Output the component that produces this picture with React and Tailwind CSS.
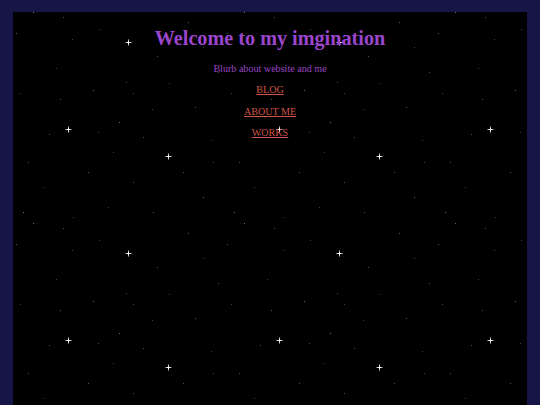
import React from "react";

// Faint stars that repeat across every 211px tile of the sky
const dimStars = [
  [20, 0, 0.4], [50, 5, 0.3], [86, 17, 0.25], [3, 21, 0.35], [59, 27, 0.25],
  [144, 44, 0.3], [43, 56, 0.25], [113, 70, 0.3], [156, 71, 0.25], [80, 78, 0.4],
  [7, 81, 0.25], [120, 81, 0.25], [47, 87, 0.35], [139, 97, 0.25], [106, 110, 0.45],
  [36, 122, 0.3], [175, 10, 0.35], [190, 35, 0.25], [205, 60, 0.3], [182, 95, 0.35],
  [198, 128, 0.25], [170, 160, 0.3], [190, 185, 0.4], [15, 150, 0.3], [30, 175, 0.25],
  [75, 160, 0.35], [95, 195, 0.25], [120, 170, 0.3], [140, 200, 0.35], [60, 205, 0.25],
  [10, 200, 0.45], [100, 140, 0.25], [130, 125, 0.3], [85, 120, 0.25], [200, 150, 0.25],
];

// Bright four-point sparkles in each tile
const brightStars = [
  [115, 30],
  [55, 117],
  [155, 144],
];

function Sparkle({ x, y }) {
  return (
    <g>
      <rect x={x - 3} y={y} width="7" height="1" fill="#6a6a6a" />
      <rect x={x} y={y - 3} width="1" height="7" fill="#6a6a6a" />
      <rect x={x - 2} y={y} width="5" height="1" fill="#bdbdbd" />
      <rect x={x} y={y - 2} width="1" height="5" fill="#bdbdbd" />
      <rect x={x - 1} y={y} width="3" height="1" fill="#ffffff" />
      <rect x={x} y={y - 1} width="1" height="3" fill="#ffffff" />
    </g>
  );
}

function StarField() {
  return (
    <svg className="absolute inset-0 w-full h-full" aria-hidden="true">
      <defs>
        <pattern id="sky" width="211" height="211" patternUnits="userSpaceOnUse">
          <rect width="211" height="211" fill="#000" />
          {dimStars.map(([x, y, o], i) => (
            <rect key={i} x={x} y={y} width="1" height="1" fill="#fff" opacity={o} />
          ))}
          {brightStars.map(([x, y], i) => (
            <Sparkle key={i} x={x} y={y} />
          ))}
        </pattern>
      </defs>
      <rect width="100%" height="100%" fill="url(#sky)" />
    </svg>
  );
}

export default function App() {
  const links = ["BLOG", "ABOUT ME", "WORKS"];
  return (
    <div className="min-h-screen bg-[#151546] pt-[12px] px-[13px] overflow-hidden">
      <div className="relative bg-black h-[393px] overflow-hidden">
        <StarField />
        <main className="relative flex flex-col items-center text-center font-['Liberation_Serif',serif]">
          <h1 className="mt-[13px] text-[20.2px] leading-[26px] font-bold text-[#9b45cc]">
            Welcome to my imgination
          </h1>
          <p className="mt-[11px] text-[10.1px] leading-[13px] text-[#9844c0]">
            Blurb about website and me
          </p>
          <nav className="mt-[9px] flex flex-col items-center gap-[9px]">
            {links.map((l) => (
              <a
                key={l}
                href="#"
                className="text-[10.1px] leading-[12.5px] text-[#cc5449] underline"
              >
                {l}
              </a>
            ))}
          </nav>
        </main>
      </div>
    </div>
  );
}
